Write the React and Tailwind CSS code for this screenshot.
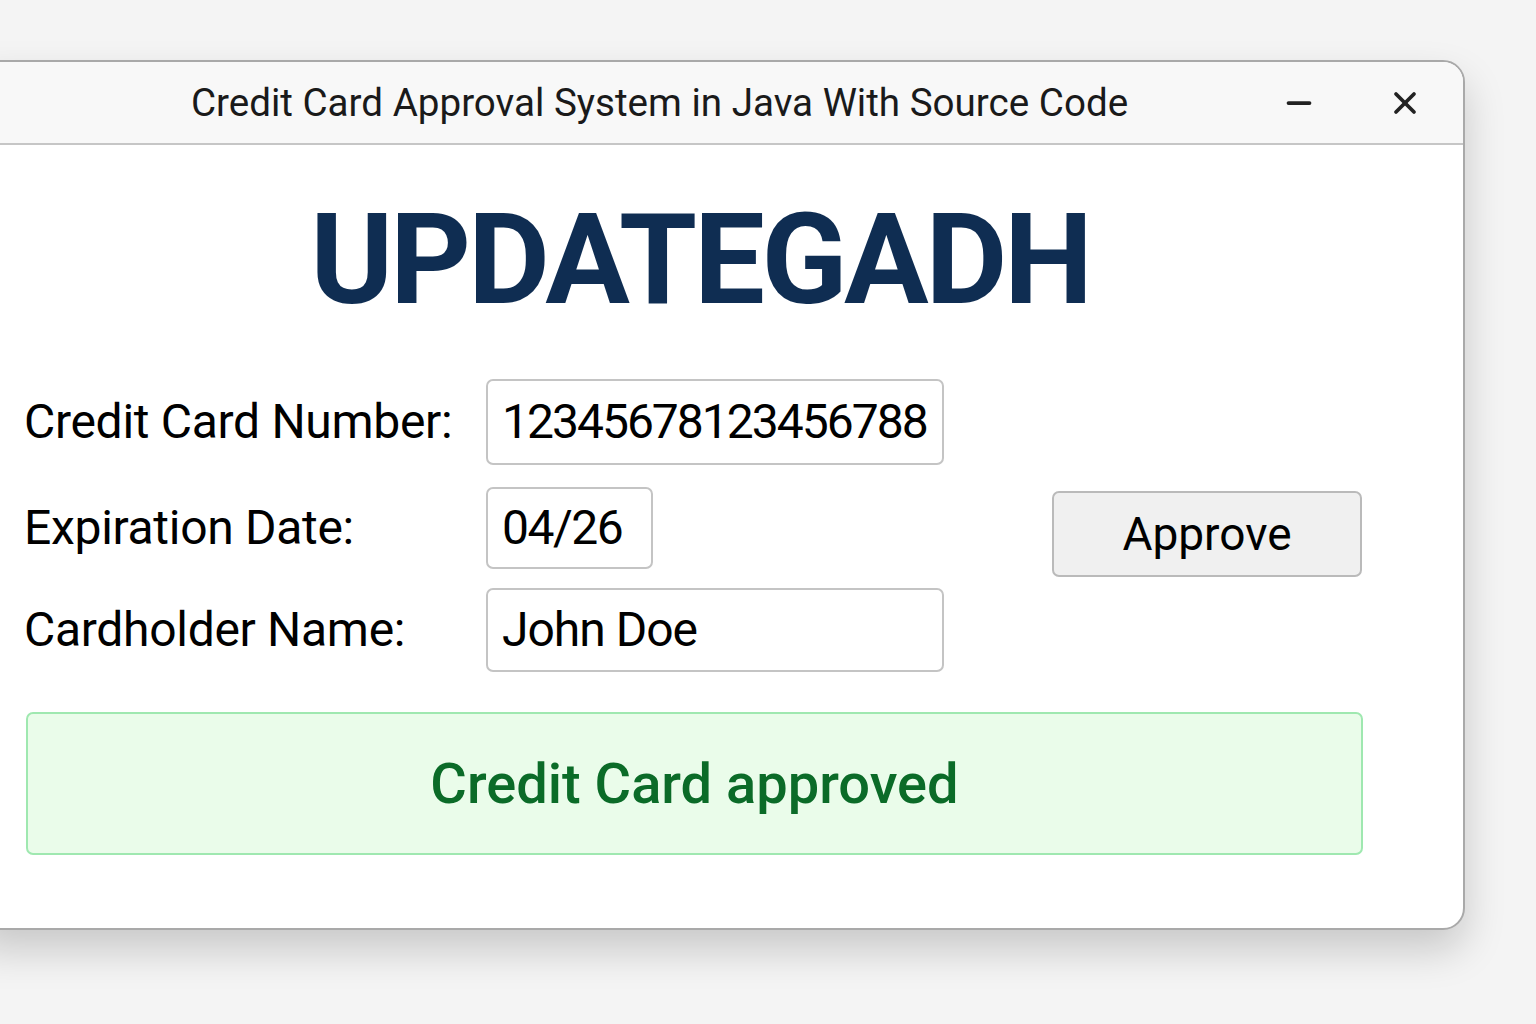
import { Minus, X } from "lucide-react";

const font = { fontFamily: "Roboto, 'Liberation Sans', sans-serif" };

function Field({ value, width, height, tracking }) {
  return (
    <div
      className={`flex items-center rounded-[7px] border-2 border-[#c4c4c4] bg-white pl-[14px] text-[48px] leading-none text-black ${width} ${height} ${tracking}`}
    >
      {value}
    </div>
  );
}

function Label({ children }) {
  return (
    <div className="flex h-full items-center text-[48px] leading-none tracking-[-0.3px] text-black">
      {children}
    </div>
  );
}

export default function App() {
  return (
    <div
      className="min-h-screen w-full overflow-hidden bg-[#f4f4f4] pt-[60px]"
      style={font}
    >
      <div className="-ml-6 flex w-[1489px] flex-col overflow-hidden rounded-tr-[22px] rounded-br-[22px] border-2 border-[#a9a9a9] bg-white shadow-[0_20px_40px_rgba(0,0,0,0.18)]">
        {/* title bar */}
        <div className="flex h-[83px] items-center border-b-2 border-[#c6c6c6] bg-[#f8f8f8]">
          <div className="flex flex-1 justify-center pl-[60px] text-[38.6px] text-[#1a1a1a]">
            Credit Card Approval System in Java With Source Code
          </div>
          <div className="flex items-center gap-[70px] pr-[40px]">
            <Minus size={36} strokeWidth={2.5} className="text-[#222]" />
            <X size={36} strokeWidth={2.5} className="text-[#222]" />
          </div>
        </div>

        {/* body */}
        <div className="flex flex-col pl-[46px] pr-[100px] pb-[73px]">
          <div className="flex h-[234px] items-center justify-center pb-[4px] pl-[13px]">
            <h1 className="text-[126px] font-bold leading-none tracking-[-3.3px] text-[#0f2d52]">
              UPDATEGADH
            </h1>
          </div>

          <div className="grid grid-cols-[462px_566px_310px] items-start">
            <Label>Credit Card Number:</Label>
            <Field
              value="12345678123456788"
              width="w-[458px]"
              height="h-[86px]"
              tracking="tracking-[-2px]"
            />
            <div />

            <div className="col-span-3 h-[22px]" />

            <Label>Expiration Date:</Label>
            <Field
              value="04/26"
              width="w-[167px]"
              height="h-[82px]"
              tracking="tracking-[-1.5px]"
            />
            <button className="mt-[4px] -mb-[8px] flex h-[86px] items-center justify-center rounded-[7px] border-2 border-[#bababa] bg-[#f0f0f0] text-[46px] leading-none text-black">
              Approve
            </button>

            <div className="col-span-3 h-[19px]" />

            <Label>Cardholder Name:</Label>
            <Field
              value="John Doe"
              width="w-[458px]"
              height="h-[84px]"
              tracking="tracking-[-1px]"
            />
            <div />
          </div>

          <div className="mt-[40px] ml-[2px] flex h-[143px] w-[1337px] items-center justify-center rounded-[7px] border-2 border-[#9fe8b0] bg-[#eafcea] text-[56px] font-medium text-[#0b6b28]">
            Credit Card approved
          </div>
        </div>
      </div>
    </div>
  );
}
